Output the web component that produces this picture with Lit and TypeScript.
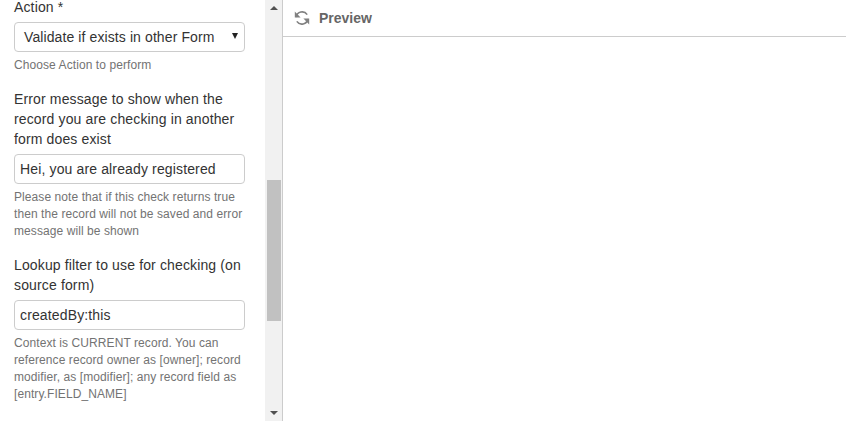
import { LitElement, html, css } from "lit";
import { customElement } from "lit/decorators.js";

@customElement("app-root")
export class AppRoot extends LitElement {
  static styles = css`
    :host { display: flex; width: 846px; height: 421px; overflow: hidden; background: #fff; font-family: "Liberation Sans", Arial, sans-serif; font-size: 14px; line-height: 20px; color: #333; }
    * { box-sizing: border-box; }
    .left { width: 265px; flex: none; overflow: hidden; padding: 0 14px 0 14px; }
    .stack { margin-top: -3px; width: 231px; }
    .group { margin-bottom: 15px; }
    label { display: block; margin-bottom: 5px; letter-spacing: 0.14px; padding-right: 4px; }
    .ctl { height: 30px; border: 1px solid #ccc; border-radius: 4px; padding: 0 5px; display: flex; align-items: center; color: #333; background: #fff; letter-spacing: 0.14px; }
    .sel { padding-left: 9px; justify-content: space-between; padding-right: 6px; letter-spacing: 0.1px; }
    .caret { width: 0; height: 0; border-left: 3.5px solid transparent; border-right: 3.5px solid transparent; border-top: 6px solid #222; margin-top: -2px; }
    .help { margin-top: 5px; font-size: 12px; line-height: 17px; color: #737373; letter-spacing: 0.08px; }
    .sb { flex: none; background: #f1f1f1; position: relative; display: flex; flex-direction: column; align-items: center; justify-content: space-between; padding: 6px 0; border-right: 1px solid #ccc; width: 18px; }
    .thumb { position: absolute; left: 2px; top: 180px; width: 14px; height: 141px; background: #c1c1c1; }
    .up { width: 0; height: 0; border-left: 4px solid transparent; border-right: 4px solid transparent; border-bottom: 4px solid #505050; }
    .down { width: 0; height: 0; border-left: 4px solid transparent; border-right: 4px solid transparent; border-top: 4px solid #505050; }
    .right { flex: 1; }
    .head { height: 36px; border-bottom: 1px solid #ccc; display: flex; align-items: center; gap: 9px; padding-left: 11px; color: #666; font-weight: bold; font-size: 14px; box-sizing: content-box; }
    svg { display: block; }
  `;
  render() {
    return html`
      <div class="left"><div class="stack">
        <div class="group">
          <label>Action *</label>
          <div class="ctl sel"><span>Validate if exists in other Form</span><span class="caret"></span></div>
          <div class="help">Choose Action to perform</div>
        </div>
        <div class="group">
          <label>Error message to show when the record you are checking in another form does exist</label>
          <div class="ctl">Hei, you are already registered</div>
          <div class="help">Please note that if this check returns true then the record will not be saved and error message will be shown</div>
        </div>
        <div class="group">
          <label>Lookup filter to use for checking (on source form)</label>
          <div class="ctl">createdBy:this</div>
          <div class="help">Context is CURRENT record. You can reference record owner as [owner]; record modifier, as [modifier]; any record field as [entry.FIELD_NAME]</div>
        </div>
      </div></div>
      <div class="sb"><span class="up"></span><span class="thumb"></span><span class="down"></span></div>
      <div class="right">
        <div class="head">
          <svg width="16" height="16" viewBox="0 0 16 16" fill="none" stroke="#808080" stroke-width="1.6">
            <path d="M2 7A6.2 6.2 0 0 1 13.2 4.6"/><path d="M14 9A6.2 6.2 0 0 1 2.8 11.4"/>
            <path d="M.8 1.6v5.8h5.8z" fill="#808080" stroke="none"/><path d="M15.2 14.4V8.6H9.4z" fill="#808080" stroke="none"/>
          </svg>
          <span>Preview</span>
        </div>
      </div>
    `;
  }
}
